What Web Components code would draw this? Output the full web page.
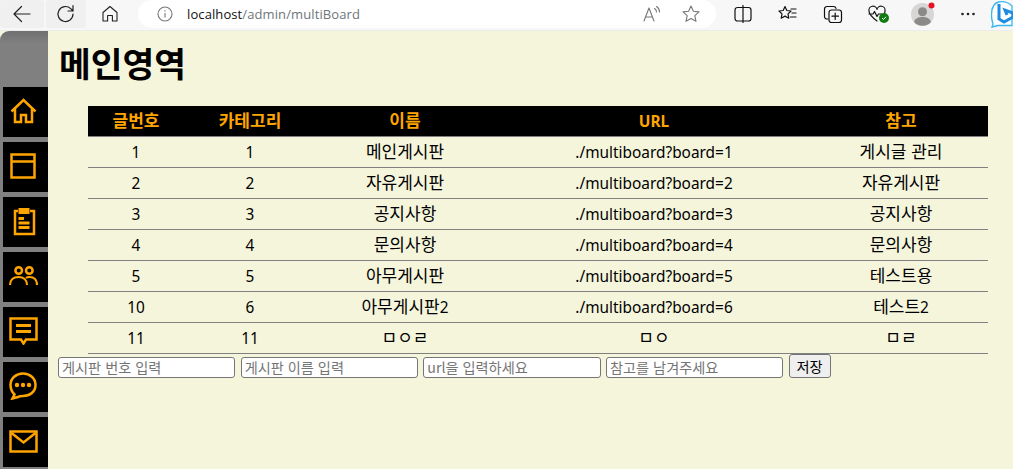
<!DOCTYPE html>
<html lang="ko"><head><meta charset="utf-8"><title>multiBoard</title>
<style>
html,body{margin:0;height:469px;overflow:hidden;background:#f7f7f7;font-family:"Liberation Sans","Noto Sans CJK KR",sans-serif}
app-shell{height:469px}
</style></head><body>
<app-shell>
  <browser-bar slot="bar" url-host="localhost" url-path="/admin/multiBoard"></browser-bar>
  <side-nav slot="nav">
    <nav-item icon="home"></nav-item><nav-item icon="window"></nav-item><nav-item icon="clip"></nav-item><nav-item icon="people"></nav-item><nav-item icon="note"></nav-item><nav-item icon="chat"></nav-item><nav-item icon="mail"></nav-item>
  </side-nav>
  <main-area heading="메인영역">
    <board-table></board-table>
    <board-form></board-form>
  </main-area>
</app-shell>
<script>
function def(name, css, html, init){
  customElements.define(name, class extends HTMLElement{
    connectedCallback(){
      if(this.shadowRoot) return;
      const r=this.attachShadow({mode:'open'});
      r.innerHTML='<style>'+css+'</style>'+(typeof html==='function'?html(this):html);
      if(init) init(this,r);
    }
  });
}
def('app-shell',`:host{display:flex;flex-direction:column;width:1013px}
.body{flex:1;display:flex;background:#f5f5dc;min-height:0}`,
`<slot name="bar"></slot><div class="body"><slot name="nav"></slot><slot></slot></div>`);

const tb=(w,svg,x='')=>`<span class="b" style="width:${w}px;${x}">${svg}</span>`;
const s=(inner,sz=22,sw=1.2,c='#222')=>`<svg width="${sz}" height="${sz}" viewBox="0 0 22 22" fill="none" stroke="${c}" stroke-width="${sw}" stroke-linecap="round" stroke-linejoin="round">${inner}</svg>`;
def('browser-bar',`:host{display:flex;height:31px;box-sizing:border-box;background:#f7f7f7;border-bottom:1px solid #ececec;align-items:flex-start;overflow:hidden}
.b{display:flex;align-items:center;justify-content:center;height:28px;flex:none}
.hov{background:#f0f0f0;border-radius:3px}
.pill{flex:none;width:578px;height:28px;background:#fff;border-radius:0 14px 14px 14px/0 14px 14px 14px;border-top-left-radius:14px;border-bottom-left-radius:14px;display:flex;align-items:center;box-sizing:border-box;padding:0 6px 0 18px;margin-left:5px;margin-right:5px}
.url{font:13px "Open Sans","Noto Sans",sans-serif;color:#111;margin-left:13px;letter-spacing:.1px;line-height:28px;white-space:nowrap}
.url span{color:#70757a}
.sp{flex:1}`,
h=>tb(44,s('<path d="M19 11H3.500M10.500 3.500 3 11l7.500 7.500"/>'),'').replace('class="b"','class="b hov"')
 +'<span style="width:2px;flex:none"></span>'
 +tb(40,s('<path d="M18 11a7.500 7.500 0 1 1-2.300-5.400L18 8M18 2.500V8h-5"/>')).replace('class="b"','class="b hov"')
 +tb(47,s('<path d="M4 9.500 11 3.500l7 6v8.500h-4.600v-5.500H8.600V18H4z" stroke-width="1.100"/>'))
 +`<div class="pill"><svg width="18" height="18" viewBox="0 0 18 18" fill="none" stroke="#777" stroke-width="1.100" style="flex:none"><circle cx="9" cy="9" r="7"/><path d="M9 8v4.500M9 5.200v1.200"/></svg>
   <span class="url">${h.getAttribute('url-host')}<span>${h.getAttribute('url-path')}</span></span><span class="sp"></span>`
 +tb(42,s('<path d="M4 18 9 5l5 13M5.800 14h6.400M14.500 5.500c1.500.8 2 2 2 3.500M16.500 3.500c2 1.200 3 3.200 3 5.500" stroke="#777"/>',22,1.100,'#777'))
 +tb(38,s('<path d="m11 3 2.400 5.300 5.600.6-4.200 3.800 1.200 5.600L11 15.500l-5 2.800 1.200-5.600L3 8.900l5.600-.6z"/>',22,1.100,'#777'))
 +`</div>`
 +tb(46,s('<rect x="3" y="4.500" width="16" height="13.500" rx="2.500"/><path d="M11 2.500v17"/>',22,1.200,'#111'),'margin-left:-1px')
 +tb(44,s('<path d="m8 3.500 1.800 4 4.200.5-3 2.900.8 4.300L8 13.100l-3.800 2.100.8-4.300-3-2.900 4.200-.5zM14 6h5M15 10h4M13.500 14H19" />',22,1.200,'#111'))
 +tb(45,s('<path d="M6 16H5a2.500 2.500 0 0 1-2.500-2.500V6A2.500 2.500 0 0 1 5 3.500h6.500A2.500 2.500 0 0 1 14 5.500"/><rect x="7" y="7" width="12.500" height="12.500" rx="2.500"/><path d="M13.200 10v6.500M10 13.200h6.500"/>',22,1.200,'#111'))
 +`<span class="b" style="width:44px;position:relative">${s('<path d="M11 18C7 15 3 12 3 8a4 4 0 0 1 8-1.500A4 4 0 0 1 19 8c0 .9-.2 1.700-.5 2.500M3 11h4l1.500-2.500 2.500 5 1.500-2.500h3" />',22,1.200,'#111')}<svg width="10" height="10" viewBox="0 0 10 10" style="position:absolute;left:24px;top:13px"><circle cx="5" cy="5" r="5" fill="#107c10"/><path d="m3 5 1.500 1.500L7 3.800" stroke="#fff" fill="none"/></svg></span>`
 +`<span class="b" style="width:46px;position:relative"><svg width="23" height="23" viewBox="0 0 23 23"><circle cx="11.500" cy="11.500" r="11.500" fill="#d6d6d6"/><circle cx="11.500" cy="8.700" r="4.500" fill="#8c8a88"/><path d="M3 19c1-4 5-5 8.500-5s7.500 1 8.500 5a11.500 11.500 0 0 1-17 0z" fill="#8c8a88"/></svg><svg width="7" height="7" style="position:absolute;left:29px;top:2px"><circle cx="3.500" cy="3.500" r="3" fill="#e81123"/></svg></span>`
 +tb(46,`<svg width="16" height="4" viewBox="0 0 16 4" fill="#222"><circle cx="2.500" cy="2" r="1.300"/><circle cx="8" cy="2" r="1.300"/><circle cx="13.500" cy="2" r="1.300"/></svg>`)
 +`<span class="b" style="width:24px;justify-content:flex-start;height:30px"><svg width="24" height="30" viewBox="0 0 24 30"><path d="M8 2C2 3 .5 9 .5 15c0 3 .5 6 1.500 9l-1 3 6-1.500h14V6c-3-3-8-5-13.500-4z" fill="#fff" stroke="#39b7ee" stroke-width="1.300"/><path d="M8 4v15l5 3 9-5v-4l-8-3 2 5" fill="none" stroke="#1f8ce0" stroke-width="3"/></svg></span>`);

def('side-nav',`:host{display:flex;flex-direction:column;gap:5px;box-sizing:border-box;flex:none;width:48px;height:438px;padding:56px 0 0 3px;overflow:hidden;border-top-left-radius:9px;background:linear-gradient(#6f6f6f 0,#808080 12px,#808080)}`,`<slot></slot>`);
const icons={
home:'<path d="M1.500 13.500 13.500 2 25.500 13.500" stroke-width="2.500"/><path d="M5 11v13h6V17h5v7h6V11" stroke-width="2.500"/>',
window:'<rect x="1.500" y="1.500" width="23" height="23"/><path d="M1.500 8.500h23"/>',
clip:'<path d="M8 4H5v23h19V4h-4"/><rect x="8.500" y="1" width="11" height="6" fill="#ffa500" stroke="none"/><path d="M8.500 11.500H14M8.500 16h11M8.500 20.500h11" stroke-width="3"/>',
people:'<circle cx="10.700" cy="6.500" r="3.300"/><circle cx="21.300" cy="6.500" r="3.300"/><path d="M2 21c0-5 3.500-8 8.500-8s8.500 3 8.500 8M18 14c1-.8 2.300-1 3.500-1 4.500 0 7.500 3 7.500 8" stroke-width="2.200"/>',
note:'<path d="M1.500 1.500h26v21H17l-2.500 4-2.500-4H1.500z"/><path d="M7 8.500h15M7 14.500h15" stroke-width="3"/>',
chat:'<path d="M14 1.500c7 0 12.500 4.800 12.500 11.500S21 24 14 24c-2 0-3.500 0-5 1l-5.500 1.500 2-4C3 20 1.500 17 1.500 13 1.500 6.300 7 1.500 14 1.500z"/><circle cx="8" cy="13" r="2.200" fill="#ffa500" stroke="none"/><circle cx="14" cy="13" r="2.200" fill="#ffa500" stroke="none"/><circle cx="20" cy="13" r="2.200" fill="#ffa500" stroke="none"/>',
mail:'<rect x="1.500" y="1.500" width="26" height="20"/><path d="m2.500 3 12 9.500 12-9.500"/>'};
const pos={home:[27,26],window:[26,26],clip:[27,29],people:[30,24],note:[29,28],chat:[28,28],mail:[29,23]};
def('nav-item',`:host{display:flex;align-items:center;justify-content:center;width:45px;height:50px;background:#000;flex:none;box-sizing:border-box;padding:0 5px 2px 0}
svg{display:block}`,
h=>{const k=h.getAttribute('icon'),p=pos[k];return `<svg width="${p[0]}" height="${p[1]}" viewBox="0 0 ${p[0]} ${p[1]}" fill="none" stroke="#ffa500" stroke-width="2.500">${icons[k]}</svg>`});

def('main-area',`:host{display:block;flex:1;min-width:0;padding:0 0 0 10px;box-sizing:border-box}
h1{font-size:34.500px;font-weight:700;margin:0;padding:15px 0 0 1px;height:75px;box-sizing:border-box;line-height:38px;color:#000}`,
h=>`<h1>${h.getAttribute('heading')}</h1><slot></slot>`);

const rows=[[1,1,'메인게시판','./multiboard?board=1','게시글 관리'],[2,2,'자유게시판','./multiboard?board=2','자유게시판'],[3,3,'공지사항','./multiboard?board=3','공지사항'],[4,4,'문의사항','./multiboard?board=4','문의사항'],[5,5,'아무게시판','./multiboard?board=5','테스트용'],[10,6,'아무게시판2','./multiboard?board=6','테스트2'],[11,11,'ㅁㅇㄹ','ㅁㅇ','ㅁㄹ']];
const wrap=t=>String(t).replace(/[\x21-\x7e]+/g,m=>`<span class="l">${m}</span>`);
def('board-table',`:host{display:block;margin-left:30px;width:900px}
table{border-collapse:collapse;table-layout:fixed;width:900px;font-size:17px;color:#000;font-family:"Noto Sans CJK KR",sans-serif}
.l{font:15.400px "Noto Sans",sans-serif}
th .l{font-weight:700}
th{background:#000;color:orange;font-weight:700;height:30px;padding:0 0 1px;border-bottom:1px solid #808080;box-sizing:border-box;line-height:24px}
td{height:31px;padding:0 0 2px;text-align:center;border-bottom:1px solid #808080;box-sizing:border-box;line-height:24px}`,
`<table><colgroup><col style="width:96px"><col style="width:132px"><col style="width:178px"><col style="width:320px"><col style="width:174px"></colgroup>
<thead><tr>${['글번호','카테고리','이름','URL','참고'].map(c=>`<th>${wrap(c)}</th>`).join('')}</tr></thead><tbody>${rows.map(r=>'<tr>'+r.map(c=>`<td>${wrap(c)}</td>`).join('')+'</tr>').join('')}</tbody></table>`);

def('board-form',`:host{display:flex;align-items:flex-end;gap:5.33px;height:24px;margin-top:0}
input{width:177.33px;height:21px;box-sizing:border-box;padding:1px 3px;border:1px solid #767676;border-radius:3px;background:#fff;font:14.2px "Noto Sans CJK KR",sans-serif;outline:0;margin:0}
input::placeholder{color:#757575}
button{height:24px;width:42px;padding:0;box-sizing:border-box;border:1px solid #767676;border-radius:3px;background:#efefef;font:14.2px "Noto Sans CJK KR",sans-serif;color:#000;margin:0}`,
`<input placeholder="게시판 번호 입력"><input placeholder="게시판 이름 입력"><input placeholder="url을 입력하세요"><input placeholder="참고를 남겨주세요"><button>저장</button>`);
</script>
</body></html>
